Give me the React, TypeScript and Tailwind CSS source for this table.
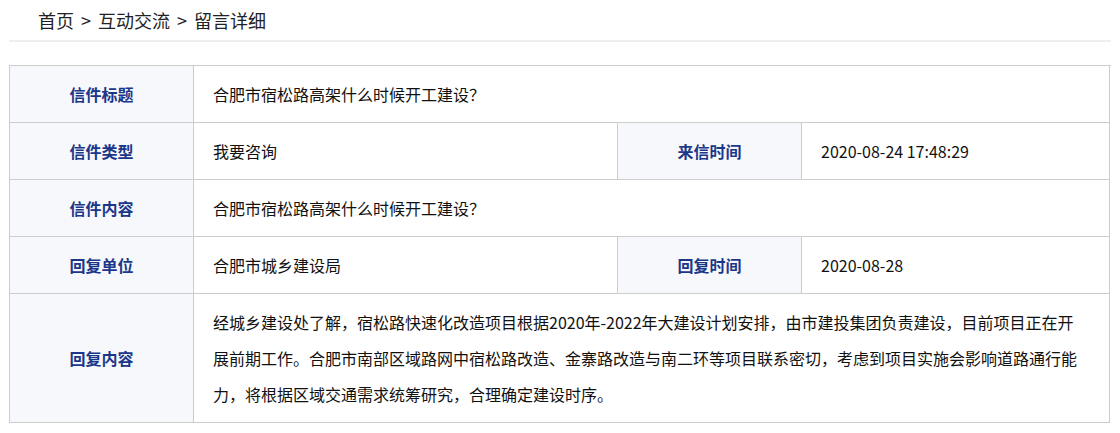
import React from "react";

const font = { fontFamily: '"Noto Sans CJK SC", "Noto Sans", sans-serif' };

function Label({ children, h = "h-[57px]" }: { children: React.ReactNode; h?: string }) {
  return (
    <div className={`${h} flex items-center justify-center border-r border-b border-[#cccccc] bg-[#f7f8fc] text-[16px] font-bold text-[#1a378a]`}>
      {children}
    </div>
  );
}

function Value({ children, span = false }: { children: React.ReactNode; span?: boolean }) {
  return (
    <div className={`${span ? "col-span-3" : ""} h-[57px] flex items-center pl-[19px] border-r border-b border-[#cccccc] text-[16px] text-[#111111]`}>
      {children}
    </div>
  );
}

export default function App() {
  return (
    <div className="w-[1120px] h-[433px] bg-white" style={font}>
      <div className="pl-[38px] h-[40px] flex items-center text-[18px] text-[#222222]">
        <span>首页</span>
        <span className="mx-[7px]">&gt;</span>
        <span>互动交流</span>
        <span className="mx-[7px]">&gt;</span>
        <span>留言详细</span>
      </div>
      <div className="mx-[9px] h-[2px] bg-[#eeeeee]" />
      <div className="mx-[9px] mt-[23px] grid grid-cols-[184px_424px_184px_308px] border-l border-t border-[#cccccc]">
        <Label>信件标题</Label>
        <Value span>合肥市宿松路高架什么时候开工建设？</Value>

        <Label>信件类型</Label>
        <Value>我要咨询</Value>
        <Label>来信时间</Label>
        <Value>2020-08-24 17:48:29</Value>

        <Label>信件内容</Label>
        <Value span>合肥市宿松路高架什么时候开工建设？</Value>

        <Label>回复单位</Label>
        <Value>合肥市城乡建设局</Value>
        <Label>回复时间</Label>
        <Value>2020-08-28</Value>

        <Label h="h-[129px]">回复内容</Label>
        <div className="col-span-3 h-[129px] pl-[19px] pr-[20px] pt-[10px] border-r border-b border-[#cccccc] text-[16px] leading-[36px] text-[#111111]">
          <div className="whitespace-nowrap">经城乡建设处了解，宿松路快速化改造项目根据2020年-2022年大建设计划安排，由市建投集团负责建设，目前项目正在开</div>
          <div className="whitespace-nowrap">展前期工作。合肥市南部区域路网中宿松路改造、金寨路改造与南二环等项目联系密切，考虑到项目实施会影响道路通行能</div>
          <div className="whitespace-nowrap">力，将根据区域交通需求统筹研究，合理确定建设时序。</div>
        </div>
      </div>
    </div>
  );
}
